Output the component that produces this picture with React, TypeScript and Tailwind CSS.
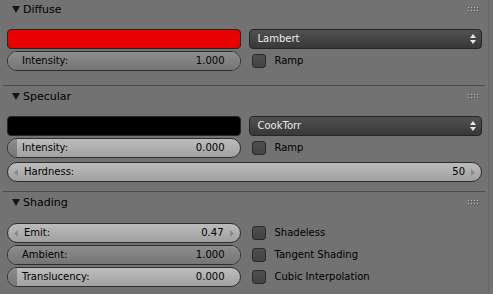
import React from 'react';

const font = { fontFamily: '"DejaVu Sans", Verdana, sans-serif' };

function Grip() {
    return (
        <svg width="11" height="5" viewBox="0 0 11 5">
            {[0, 3, 6, 9].map((x) =>
                [0, 3].map((y) => (
                    <g key={`${x}-${y}`}>
                        <rect x={x + 1} y={y + 1} width="1" height="1" fill="#555" />
                        <rect x={x} y={y} width="1" height="1" fill="#b8b8b8" />
                    </g>
                ))
            )}
        </svg>
    );
}

function Section({ title, first, children, padTop = 'pt-[10px]', padBottom = 'pb-[14px]' }: { title: string; first?: boolean; children: React.ReactNode; padTop?: string; padBottom?: string }) {
    return (
        <div className={first ? '-mt-[2px] border-t border-transparent mx-[3px]' : 'border-t border-[#4c4c4c] mx-[3px]'}>
            <div className="h-[20px] flex items-center pl-[9px] pr-[6px]">
                <svg width="8" height="7" viewBox="0 0 8 7" className="mr-[3px]">
                    <path d="M0 0 H8 L4 7 Z" fill="#161616" />
                </svg>
                <span className="text-[11px] text-black leading-none" style={font}>{title}</span>
                <div className="ml-auto pt-[1px]">
                    <Grip />
                </div>
            </div>
            <div className={`pl-[4px] pr-[3px] ${padTop} ${padBottom}`}>{children}</div>
        </div>
    );
}

function ColorBar({ color }: { color: string }) {
    return <div className="h-[20px] rounded-[4px] border border-[#262626]" style={{ background: color }} />;
}

function Dropdown({ label }: { label: string }) {
    return (
        <div className="h-[20px] rounded-[4px] border border-[#262626] bg-gradient-to-b from-[#515151] to-[#383838] flex items-center pl-[8px] pr-[5px]">
            <span className="text-[10px] text-[#ececec] leading-none" style={font}>{label}</span>
            <svg width="6" height="12" viewBox="0 0 6 12" className="ml-auto">
                <path d="M0 5 L3 1 L6 5 Z" fill="#e6e6e6" />
                <path d="M0 7 L3 11 L6 7 Z" fill="#e6e6e6" />
            </svg>
        </div>
    );
}

function Slider({ label, value, fill }: { label: string; value: string; fill: number }) {
    return (
        <div className="relative h-[20px] rounded-full border border-[#2e2e2e] bg-gradient-to-b from-[#bcbcbc] to-[#a2a2a2] overflow-hidden">
            <div
                className="absolute left-0 top-0 bottom-0 bg-gradient-to-b from-[#8d8d8d] to-[#757575]"
                style={{ width: `calc(9px + (100% - 9px) * ${fill})` }}
            />
            <div className="relative h-full flex items-center pl-[14px] pr-[15px] text-[10px] text-black leading-none" style={font}>
                <span>{label}</span>
                <span className="ml-auto">{value}</span>
            </div>
        </div>
    );
}

function NumField({ label, value }: { label: string; value: string }) {
    return (
        <div className="h-[20px] rounded-full border border-[#2e2e2e] bg-gradient-to-b from-[#bcbcbc] to-[#a0a0a0] flex items-center pl-[6px] pr-[6px] text-[10px] text-black leading-none" style={font}>
            <svg width="4" height="7" viewBox="0 0 4 7" className="mr-[6px]">
                <path d="M4 0 L0 3.5 L4 7 Z" fill="#8a8a8a" />
            </svg>
            <span>{label}</span>
            <span className="ml-auto mr-[6px]">{value}</span>
            <svg width="4" height="7" viewBox="0 0 4 7">
                <path d="M0 0 L4 3.5 L0 7 Z" fill="#8a8a8a" />
            </svg>
        </div>
    );
}

function Check({ label }: { label: string }) {
    return (
        <div className="h-[20px] flex items-center pl-[3px]">
            <div className="w-[14px] h-[14px] rounded-[3px] border border-[#2a2a2a] bg-gradient-to-b from-[#4f4f4f] to-[#434343]" />
            <span className="ml-[9px] text-[10px] text-black leading-none" style={font}>{label}</span>
        </div>
    );
}

export default function App() {
    return (
        <div className="w-[493px] h-[294px] bg-[#727272] overflow-hidden">
            <div className="w-[489px] h-full border-r border-[#636363]">
                <Section title="Diffuse" first>
                    <div className="grid grid-cols-2 gap-x-[8px] gap-y-[2px]">
                        <ColorBar color="#e60000" />
                        <Dropdown label="Lambert" />
                        <Slider label="Intensity:" value="1.000" fill={1} />
                        <Check label="Ramp" />
                    </div>
                </Section>
                <Section title="Specular" padBottom="pb-[9px]">
                    <div className="grid grid-cols-2 gap-x-[8px] gap-y-[2px]">
                        <ColorBar color="#000000" />
                        <Dropdown label="CookTorr" />
                        <Slider label="Intensity:" value="0.000" fill={0} />
                        <Check label="Ramp" />
                    </div>
                    <div className="mt-[4px]">
                        <NumField label="Hardness:" value="50" />
                    </div>
                </Section>
                <Section title="Shading" padTop="pt-[11px]">
                    <div className="grid grid-cols-2 gap-x-[8px] gap-y-[2px]">
                        <NumField label="Emit:" value="0.47" />
                        <Check label="Shadeless" />
                        <Slider label="Ambient:" value="1.000" fill={1} />
                        <Check label="Tangent Shading" />
                        <Slider label="Translucency:" value="0.000" fill={0} />
                        <Check label="Cubic Interpolation" />
                    </div>
                </Section>
            </div>
        </div>
    );
}
